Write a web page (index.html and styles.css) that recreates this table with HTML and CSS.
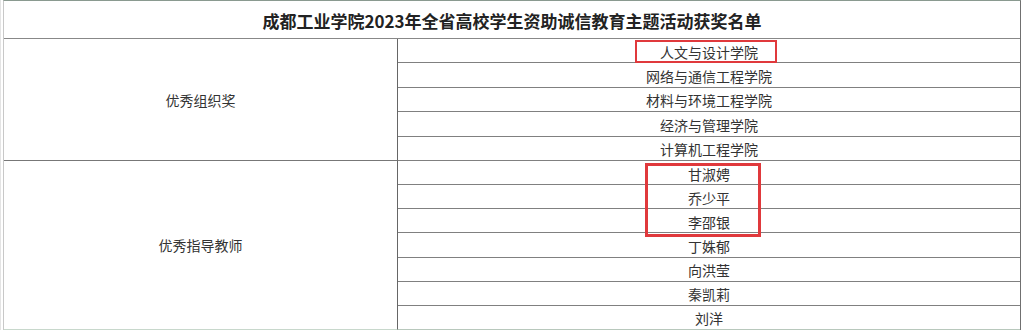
FILE: index.html
```html
<!DOCTYPE html>
<html lang="zh-CN">
<head>
    <meta charset="UTF-8">
    <title>获奖名单</title>
    <link rel="stylesheet" href="styles.css">
</head>
<body>
    <div class="sheet">
        <div class="title">成都工业学院2023年全省高校学生资助诚信教育主题活动获奖名单</div>

        <div class="group group-org">
            <div class="label">优秀组织奖</div>
            <div class="list">
                <div class="cell">人文与设计学院</div>
                <div class="cell">网络与通信工程学院</div>
                <div class="cell">材料与环境工程学院</div>
                <div class="cell">经济与管理学院</div>
                <div class="cell">计算机工程学院</div>
            </div>
        </div>

        <div class="group group-teacher">
            <div class="label">优秀指导教师</div>
            <div class="list">
                <div class="cell">甘淑娉</div>
                <div class="cell">乔少平</div>
                <div class="cell">李邵银</div>
                <div class="cell">丁姝郁</div>
                <div class="cell">向洪莹</div>
                <div class="cell">秦凯莉</div>
                <div class="cell">刘洋</div>
            </div>
        </div>
    </div>

    <!-- red marks drawn over the sheet -->
    <div class="mark mark-college"></div>
    <div class="mark mark-names"></div>
</body>
</html>
```

FILE: styles.css
```css
* {
    margin: 0;
    padding: 0;
    box-sizing: border-box;
}

body {
    background: #fff;
    color: #333;
    font-family: "Noto Sans CJK SC", "Noto Sans", sans-serif;
    width: 1024px;
    height: 330px;
    overflow: hidden;
    position: relative;
    /* faint spreadsheet gridlines outside the table */
    background-image: linear-gradient(90deg, #e4e4e4 1px, transparent 1px);
    background-size: 3px 100%;
    background-repeat: no-repeat;
}

.sheet {
    width: 1018px;
    margin-left: 3px;
    border-top: 1px solid #8a9a90;
    border-left: 1px solid #c8c8c8;
    border-right: 1px solid #707070;
    background: #fff;
}

.title {
    height: 38px;
    border-bottom: 1px solid #888;
    display: flex;
    justify-content: center;
    align-items: center;
    font-size: 17px;
    font-weight: 700;
    color: #222;
    padding-top: 2px;
}

.group {
    display: grid;
    grid-template-columns: 394px 1fr;
}

.group-org {
    height: 122px;
}

.group-teacher {
    height: 169px;
}

.label {
    display: flex;
    justify-content: center;
    align-items: center;
    border-right: 1px solid #666;
    border-bottom: 1px solid #777;
    font-size: 14px;
}

.group-teacher .label {
    border-bottom: 1px solid #c8d8cc;
}

.list {
    display: grid;
    grid-auto-rows: 1fr;
}

.cell {
    display: flex;
    justify-content: center;
    align-items: center;
    border-bottom: 1px solid #808080;
    font-size: 14px;
    padding-top: 2px;
}

.group-teacher .cell:last-child {
    border-bottom-color: #b8c8bc;
}

.mark {
    position: absolute;
    border: 2px solid #e0393c;
}

.mark-college {
    left: 635px;
    top: 40px;
    width: 142px;
    height: 23px;
}

.mark-names {
    left: 645px;
    top: 163px;
    width: 116px;
    height: 74px;
    border-width: 3px;
}
```
